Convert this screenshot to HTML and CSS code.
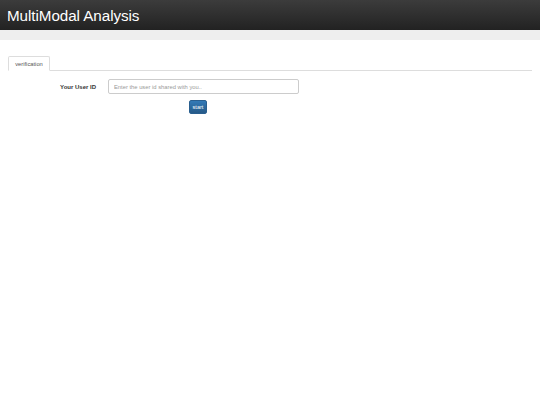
FILE: index.html
```html
<!DOCTYPE html>
<html>
<head>
<meta charset="utf-8">
<link rel="stylesheet" href="styles.css">
</head>
<body>
<div class="navbar"><span class="brand">MultiModal Analysis</span></div>
<div class="band"></div>
<div class="content">
  <div class="tabs"><div class="tab">verification</div></div>
  <div class="form-row">
    <label class="label">Your User ID</label>
    <input class="input" type="text" placeholder="Enter the user id shared with you..">
  </div>
  <div class="btn-row"><button class="btn">start</button></div>
</div>
</body>
</html>
```
FILE: styles.css
```css
body {
  margin: 0;
  font-family: "Liberation Sans", Arial, sans-serif;
  background: #fff;
}
.navbar {
  height: 30px;
  background: linear-gradient(#3c3c3c, #222);
  display: flex;
  align-items: center;
  padding-left: 7px;
  box-sizing: border-box;
}
.brand {
  color: #fff;
  font-size: 15.2px;
  letter-spacing: -0.05px;
}
.band {
  height: 10px;
  background: #eeeeee;
}
.content {
  padding: 16px 8px 0 8px;
}
.tabs {
  width: 524px;
  border-bottom: 1px solid #ddd;
  display: flex;
}
.tab {
  border: 1px solid #ddd;
  border-bottom: 1px solid #fff;
  margin-bottom: -1px;
  border-radius: 2px 2px 0 0;
  height: 15px;
  width: 42px;
  box-sizing: border-box;
  font-size: 5.8px;
  color: #555;
  display: flex;
  align-items: center;
  justify-content: center;
  padding-top: 1px;
}
.form-row {
  display: flex;
  align-items: center;
  margin-top: 8px;
  height: 15px;
}
.label {
  width: 88px;
  text-align: right;
  font-size: 6px;
  font-weight: bold;
  color: #333;
  padding-right: 12px;
}
.input {
  width: 191px;
  height: 15px;
  box-sizing: border-box;
  border: 1px solid #ccc;
  border-radius: 2px;
  font-size: 5.8px;
  padding: 0 5px;
  font-family: "Liberation Sans", Arial, sans-serif;
  color: #555;
}
.input::placeholder {
  color: #999;
}
.btn-row {
  display: flex;
  padding-left: 181px;
  margin-top: 6px;
}
.btn {
  width: 18px;
  height: 14px;
  padding: 0;
  border: 1px solid #2a5f8f;
  border-radius: 2px;
  background: linear-gradient(#337ab7, #265a88);
  color: #fff;
  font-size: 5.6px;
  font-family: "Liberation Sans", Arial, sans-serif;
}
```
